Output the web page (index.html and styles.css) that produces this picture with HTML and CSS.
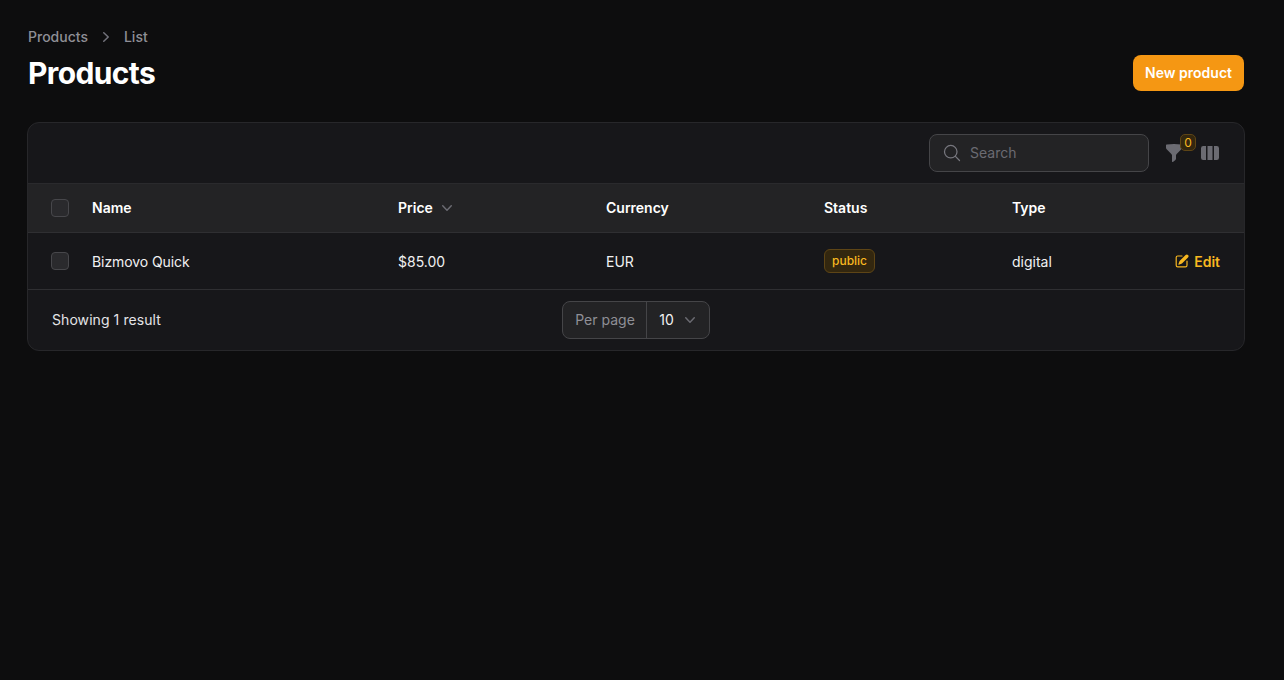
FILE: index.html
```html
<!DOCTYPE html>
<html lang="en">
<head>
<meta charset="utf-8">
<title>Products</title>
<link rel="stylesheet" href="styles.css">
</head>
<body>
<main class="page">
  <nav class="crumbs">
    <span>Products</span>
    <svg class="crumb-sep" viewBox="0 0 20 20" fill="currentColor"><path fill-rule="evenodd" d="M7.21 14.77a.75.75 0 0 1 .02-1.06L11.168 10 7.23 6.29a.75.75 0 1 1 1.04-1.08l4.5 4.25a.75.75 0 0 1 0 1.08l-4.5 4.25a.75.75 0 0 1-1.06-.02Z" clip-rule="evenodd"/></svg>
    <span>List</span>
  </nav>
  <header class="head">
    <h1>Products</h1>
    <a class="btn-new">New product</a>
  </header>
  <section class="card">
    <div class="toolbar">
      <label class="search">
        <svg class="search-icon" viewBox="0 0 24 24" fill="none" stroke="currentColor" stroke-width="1.5" stroke-linecap="round" stroke-linejoin="round"><path d="m21 21-5.197-5.197m0 0A7.5 7.5 0 1 0 5.196 5.196a7.5 7.5 0 0 0 10.607 10.607Z"/></svg>
        <span>Search</span>
      </label>
      <div class="filter">
        <svg class="tool-icon" viewBox="0 0 20 20" fill="currentColor"><path fill-rule="evenodd" d="M2.628 1.601C5.028 1.206 7.49 1 10 1s4.973.206 7.372.601a.75.75 0 0 1 .628.74v2.288a2.25 2.25 0 0 1-.659 1.59l-4.682 4.683a2.25 2.25 0 0 0-.659 1.59v3.037c0 .684-.31 1.33-.844 1.757l-1.937 1.55A.75.75 0 0 1 8 18.25v-5.757a2.25 2.25 0 0 0-.659-1.591L2.659 6.22A2.25 2.25 0 0 1 2 4.629V2.34a.75.75 0 0 1 .628-.74Z" clip-rule="evenodd"/></svg>
        <span class="filter-badge">0</span>
      </div>
      <svg class="tool-icon" viewBox="0 0 20 20" fill="currentColor"><path d="M14 17h2.75A2.25 2.25 0 0 0 19 14.75v-9.5A2.25 2.25 0 0 0 16.75 3H14v14ZM12.5 3h-5v14h5V3ZM3.25 3H6v14H3.25A2.25 2.25 0 0 1 1 14.75v-9.5A2.25 2.25 0 0 1 3.25 3Z"/></svg>
    </div>
    <table class="table">
      <colgroup>
        <col class="c-check"><col class="c-name"><col class="c-price"><col class="c-currency"><col class="c-status"><col class="c-type"><col class="c-action">
      </colgroup>
      <thead>
        <tr>
          <th class="cell-check"><span class="checkbox"></span></th>
          <th>Name</th>
          <th><span class="sortable">Price
            <svg class="sort-icon" viewBox="0 0 20 20" fill="currentColor"><path fill-rule="evenodd" d="M5.23 7.21a.75.75 0 0 1 1.06.02L10 11.168l3.71-3.938a.75.75 0 1 1 1.08 1.04l-4.25 4.5a.75.75 0 0 1-1.08 0l-4.25-4.5a.75.75 0 0 1 .02-1.06Z" clip-rule="evenodd"/></svg></span></th>
          <th>Currency</th>
          <th>Status</th>
          <th>Type</th>
          <th></th>
        </tr>
      </thead>
      <tbody>
        <tr>
          <td class="cell-check"><span class="checkbox"></span></td>
          <td class="cell-text cell-name">Bizmovo Quick</td>
          <td class="cell-text">$85.00</td>
          <td class="cell-text">EUR</td>
          <td><span class="badge">public</span></td>
          <td class="cell-text">digital</td>
          <td class="cell-text cell-action"><a class="edit">
            <svg class="edit-icon" viewBox="0 0 20 20" fill="currentColor"><path d="m5.433 13.917 1.262-3.155A4 4 0 0 1 7.58 9.42l6.92-6.918a2.121 2.121 0 0 1 3 3l-6.92 6.918c-.383.383-.84.685-1.343.886l-3.154 1.262a.5.5 0 0 1-.65-.65Z"/><path d="M3.5 5.75c0-.69.56-1.25 1.25-1.25H10A.75.75 0 0 0 10 3H4.75A2.75 2.75 0 0 0 2 5.75v9.5A2.75 2.75 0 0 0 4.75 18h9.5A2.75 2.75 0 0 0 17 15.25V10a.75.75 0 0 0-1.5 0v5.25c0 .69-.56 1.25-1.25 1.25h-9.5c-.69 0-1.25-.56-1.25-1.25v-9.5Z"/></svg>Edit</a></td>
        </tr>
      </tbody>
    </table>
    <footer class="foot">
      <span class="result">Showing 1 result</span>
      <div class="perpage">
        <span class="perpage-label">Per page</span>
        <span class="perpage-value">10
          <svg class="perpage-icon" viewBox="0 0 20 20" fill="currentColor"><path fill-rule="evenodd" d="M5.23 7.21a.75.75 0 0 1 1.06.02L10 11.168l3.71-3.938a.75.75 0 1 1 1.08 1.04l-4.25 4.5a.75.75 0 0 1-1.08 0l-4.25-4.5a.75.75 0 0 1 .02-1.06Z" clip-rule="evenodd"/></svg>
        </span>
      </div>
      <span class="foot-spacer"></span>
    </footer>
  </section>
</main>
</body>
</html>
```
FILE: styles.css
```css
* { box-sizing: border-box; }
html, body { height: 100%; }
body {
  margin: 0;
  background: #0d0d0e;
  color: #fff;
  font-family: Inter, "Liberation Sans", sans-serif;
  font-size: 14px;
  line-height: 20px;
}
.page { padding: 27px 39px 0 27px; }
.crumbs {
  display: flex;
  align-items: center;
  gap: 8px;
  height: 20px;
  padding-left: 1px;
  color: #8f8f96;
  font-weight: 500;
}
.crumb-sep { width: 20px; height: 20px; color: #71717a; }
.head {
  display: flex;
  justify-content: space-between;
  align-items: center;
  margin-top: 8px;
  height: 36px;
  padding: 0 1px;
}
h1 {
  margin: 0;
  font-size: 30px;
  line-height: 36px;
  font-weight: 700;
  letter-spacing: -0.63px;
}
.btn-new {
  display: flex;
  align-items: center;
  height: 36px;
  padding: 0 12px;
  border-radius: 8px;
  background: #f59713;
  color: #fff;
  font-weight: 600;
}
.card {
  margin-top: 31px;
  width: 1218px;
  height: 229px;
  border: 1px solid #27272a;
  border-radius: 12px;
  background: #17171a;
  overflow: hidden;
}
.toolbar {
  display: flex;
  align-items: center;
  justify-content: flex-end;
  height: 61px;
  padding-right: 24px;
  border-bottom: 1px solid #2a2a2d;
}
.search {
  display: flex;
  align-items: center;
  gap: 8px;
  width: 220px;
  height: 38px;
  padding-left: 12px;
  border: 1px solid #454548;
  border-radius: 8px;
  background: #232325;
  color: #6b6b72;
}
.search-icon { width: 20px; height: 20px; color: #77777e; }
.filter { position: relative; display: flex; margin-left: 15px; margin-right: 16px; }
.tool-icon { display: block; width: 20px; height: 20px; color: #6b6b72; }
.filter-badge {
  position: absolute;
  top: -9px;
  left: 16px;
  width: 16px;
  height: 17px;
  border: 1px solid #5e4516;
  border-radius: 5px;
  background: #33270f;
  color: #f8b820;
  font-size: 12px;
  line-height: 15px;
  text-align: center;
}
.table {
  width: 1216px;
  border-collapse: separate;
  border-spacing: 0;
  table-layout: fixed;
}
.c-check { width: 64px; }
.c-name { width: 306px; }
.c-price { width: 208px; }
.c-currency { width: 218px; }
.c-status { width: 188px; }
.c-type { width: 120px; }
th {
  height: 49px;
  padding: 0;
  background: #232325;
  border-bottom: 1px solid #2f2f32;
  text-align: left;
  font-weight: 600;
  color: #fff;
}
td {
  height: 57px;
  padding: 0;
  border-bottom: 1px solid #2f2f32;
  color: #f1f1f2;
}
.cell-text { padding-top: 2px; }
.cell-check { padding-left: 23px; }
.cell-name { letter-spacing: -0.08px; }
.checkbox {
  display: block;
  width: 18px;
  height: 18px;
  border: 1px solid #47474b;
  border-radius: 4px;
  background: #2a2a2d;
}
.sortable { display: flex; align-items: center; gap: 4px; }
.sort-icon { width: 20px; height: 20px; color: #6b6b72; }
.badge {
  display: inline-block;
  height: 24px;
  padding: 0 7px;
  border: 1px solid #5e4516;
  border-radius: 6px;
  background: #33270f;
  color: #f8b820;
  font-size: 12px;
  font-weight: 500;
  line-height: 22px;
  vertical-align: middle;
}
.cell-action { padding-right: 24px; }
.edit {
  display: flex;
  align-items: center;
  justify-content: flex-end;
  gap: 4px;
  color: #f8b820;
  font-weight: 600;
}
.edit-icon { width: 16px; height: 16px; margin-top: -2px; }
.foot {
  display: grid;
  grid-template-columns: 1fr auto 1fr;
  align-items: center;
  height: 60px;
  padding: 0 24px;
}
.result { color: #e4e4e7; letter-spacing: 0.07px; }
.perpage {
  display: flex;
  height: 38px;
  border: 1px solid #454548;
  border-radius: 8px;
  background: #232325;
}
.perpage-label {
  display: flex;
  align-items: center;
  width: 84px;
  padding: 0 12px;
  border-right: 1px solid #454548;
  color: #8f8f96;
  white-space: nowrap;
}
.perpage-value {
  display: flex;
  align-items: center;
  gap: 6px;
  padding: 0 9px 0 12px;
  color: #f1f1f2;
}
.perpage-icon { width: 20px; height: 20px; color: #6b6b72; }
```
